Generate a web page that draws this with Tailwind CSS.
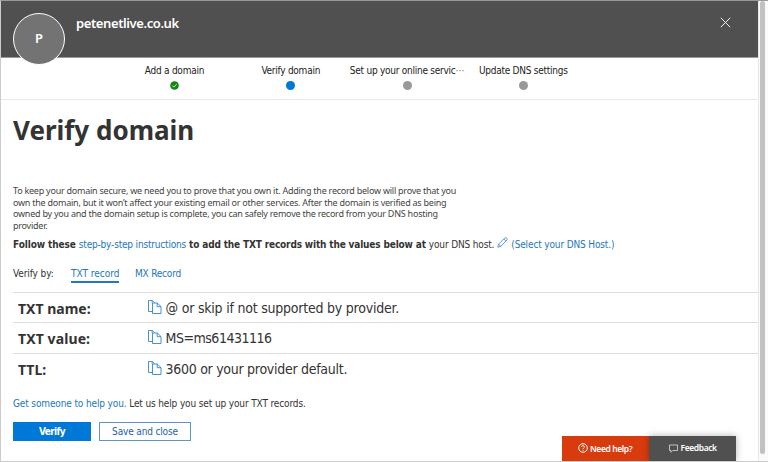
<!DOCTYPE html>
<html lang="en">
<head>
<meta charset="utf-8">
<title>Verify domain</title>
<script src="https://cdn.jsdelivr.net/npm/@tailwindcss/browser@4"></script>
</head>
<body class="flex h-[462px] w-[768px] overflow-hidden border-t border-b border-l border-t-[#999] border-b-[#ccc] border-l-[#ccc] bg-white font-['DejaVu_Sans_Condensed','DejaVu_Sans',sans-serif] text-[#333] [font-stretch:condensed]">
<svg class="hidden">
  <symbol id="copy" viewBox="0 0 14 15"><path d="M4 11.5H.5V.5h3.8l2.4 2.3M4.5 3h4.8l3.7 3.6v6.9H4.5zM9.2 3v3.7H13M4.2.5v2.3" fill="none" stroke="#3584cb" stroke-width=".9"/></symbol>
</svg>
<main class="relative h-full w-[757px] shrink-0">
  <header class="flex h-[57px] border-b border-[#999] bg-[#505050] pl-3 text-white">
    <div class="z-10 mt-3 flex h-[52px] w-[52px] shrink-0 items-center justify-center rounded-full border border-white bg-[#737373] text-[13px] font-semibold font-['Noto_Sans',sans-serif]">P</div>
    <div class="mt-[13px] ml-[11px] text-[13px] leading-[18px] font-semibold tracking-[-0.4px] font-['Noto_Sans',sans-serif]">petenetlive.co.uk</div>
    <svg class="mt-4 mr-[27px] ml-auto h-[11px] w-[11px]" viewBox="0 0 11 11"><path d="M.8.8l9.4 9.4M10.2.8L.8 10.2" stroke="#eee" stroke-width="1"/></svg>
  </header>
  <nav class="flex h-[42px] border-b border-[#e8e8e8] pl-[115.3px] text-center text-[10px] leading-[14px] tracking-[-0.25px] whitespace-nowrap text-[#222]">
    <div class="flex w-[116.3px] flex-col items-center pt-[6px]"><span>Add a domain</span>
      <svg class="mt-[2.5px] h-[9px] w-[9px]" viewBox="0 0 9 9"><circle cx="4.5" cy="4.5" r="4.3" fill="#128712"/><path d="M2.3 4.6l1.5 1.5 2.9-3" fill="none" stroke="#fff" stroke-width=".8"/></svg></div>
    <div class="flex w-[116.3px] flex-col items-center pt-[6px]"><span>Verify domain</span><i class="mt-[2.5px] h-[9px] w-[9px] rounded-full bg-[#0078d7]"></i></div>
    <div class="flex w-[116.3px] flex-col items-center pt-[6px]"><span>Set up your online servic<span class="text-[#777]">⋯</span></span><i class="mt-[2.5px] h-[9px] w-[9px] rounded-full bg-[#999]"></i></div>
    <div class="flex w-[116.3px] flex-col items-center pt-[6px]"><span>Update DNS settings</span><i class="mt-[2.5px] h-[9px] w-[9px] rounded-full bg-[#999]"></i></div>
  </nav>
  <section class="pl-3 whitespace-nowrap">
    <h1 class="pt-[13px] text-[26px] leading-[34px] font-bold font-['Noto_Sans',sans-serif]">Verify domain</h1>
    <p class="mt-[38px] text-[9px] leading-[11.7px] tracking-[-0.24px] text-[#444] font-['Noto_Sans',sans-serif]">To keep your domain secure, we need you to prove that you own it. Adding the record below will prove that you<br>own the domain, but it won’t affect your existing email or other services. After the domain is verified as being<br>owned by you and the domain setup is complete, you can safely remove the record from your DNS hosting<br>provider.</p>
    <div class="mt-[5px] flex h-4 items-center text-[10px]">
      <b class="tracking-[-0.1px]">Follow these</b><a class="ml-[3px] tracking-[-0.18px] text-[#2277bd]">step-by-step instructions</a><b class="ml-[3px] tracking-[-0.16px]">to add the TXT records with the values below at</b><span class="ml-[3px] tracking-[-0.15px]">your DNS host.</span>
      <svg class="mb-[5px] ml-[3px] h-[11px] w-[11px]" viewBox="0 0 11 11"><path d="M.8 10.2l.8-3L7.7 1c1.2-1.2 3.4.8 2.1 2.2L3.7 9.4zM1.6 7.2l2.1 2.2M6.8 2l2.1 2.1" fill="none" stroke="#3584cb" stroke-width=".8"/></svg>
      <a class="ml-[3px] tracking-[-0.14px] text-[#2277bd]">(Select your DNS Host.)</a>
    </div>
    <div class="mt-[13px] flex h-[17px] text-[10px] leading-[15px]">
      <span class="w-[58px] tracking-[-0.1px]">Verify by:</span><a class="w-[48px] border-b-2 border-[#2277bd] text-[#2277bd]">TXT record</a><a class="ml-4 tracking-[-0.2px] text-[#2277bd]">MX Record</a>
    </div>
    <dl class="mt-[9px] text-[14px]">
      <div class="flex h-[30px] border-t border-[#ddd] pl-[5px] leading-[31px]"><dt class="w-[130px] font-bold font-['Noto_Sans',sans-serif]">TXT name:</dt><dd class="flex tracking-[-0.22px]"><svg class="mt-[7px] mr-[3.5px] h-[15px] w-[14px]"><use href="#copy"/></svg>@ or skip if not supported by provider.</dd></div>
      <div class="flex h-[31px] border-t border-[#ddd] pl-[5px] leading-[31px]"><dt class="w-[130px] font-bold tracking-[0.1px] font-['Noto_Sans',sans-serif]">TXT value:</dt><dd class="flex tracking-[-0.48px]"><svg class="mt-[7px] mr-[3.5px] h-[15px] w-[14px]"><use href="#copy"/></svg>MS=ms61431116</dd></div>
      <div class="flex h-[31px] border-t border-[#ddd] pl-[5px] leading-[31px]"><dt class="w-[130px] font-bold font-['Noto_Sans',sans-serif]">TTL:</dt><dd class="flex tracking-[-0.28px]"><svg class="mt-[7px] mr-[3.5px] h-[15px] w-[14px]"><use href="#copy"/></svg>3600 or your provider default.</dd></div>
    </dl>
    <p class="mt-[12px] text-[10px] leading-4 tracking-[-0.13px]"><a class="text-[#2277bd]">Get someone to help you.</a> Let us help you set up your TXT records.</p>
    <div class="mt-[10px] flex gap-2 text-[10px]">
      <button class="h-[19.5px] w-[78px] bg-[#0078d7] font-bold tracking-[-0.6px] text-white">Verify</button>
      <button class="h-[19.5px] w-[92px] border border-[#5a96cb] tracking-[-0.15px] text-[#1b62a8]">Save and close</button>
    </div>
  </section>
  <aside class="absolute right-[22px] bottom-0 flex h-[25px] text-[8.5px] font-semibold tracking-[-0.4px] whitespace-nowrap text-white font-['Noto_Sans',sans-serif]">
    <div class="flex w-[87.5px] items-center bg-[#d83b0e] pl-4"><svg class="mr-[2.5px] mb-[2px] h-[10px] w-[10px]" viewBox="0 0 10 10"><circle cx="5" cy="5" r="4.3" fill="none" stroke="#fff"/><path d="M3.6 4c0-1.9 2.8-1.8 2.8-.1C6.4 5 5 4.9 5 6.2M5 7v.9" fill="none" stroke="#fff" stroke-width=".9"/></svg><span class="mt-[2px]">Need help?</span></div>
    <div class="flex w-[87px] items-center bg-[#505050] pl-5 shadow-[0_0_7px_rgba(0,0,0,.3)]"><svg class="mr-[2.5px] h-[9px] w-[9px]" viewBox="0 0 9 9"><path d="M.5 1h8v5.5H3.8L2 8.3V6.5H.5z" fill="none" stroke="#ddd" stroke-width=".8"/></svg>Feedback</div>
  </aside>
</main>
<div class="h-full w-[10px] border-l border-[#e8e8e8] bg-[#fafafa] pl-px"><div class="h-[453px] w-[5px] rounded-full bg-[#c1c1c1]"></div></div>
</body>
</html>
